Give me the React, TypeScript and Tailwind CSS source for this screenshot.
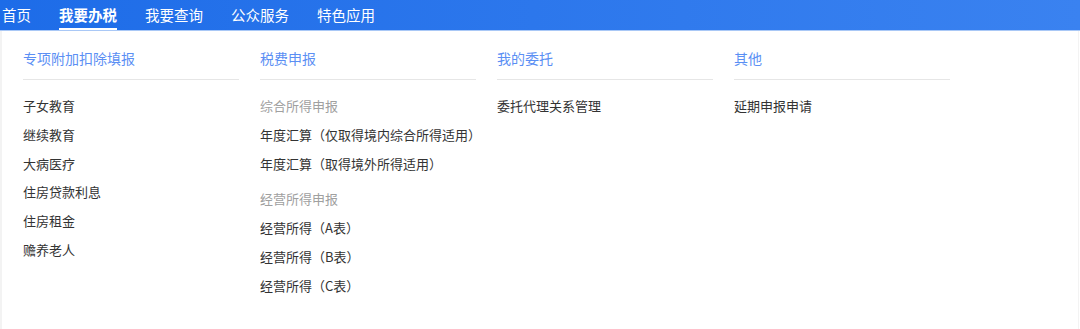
import React from "react";

type Group = { title?: string; items: string[] };
type Column = { heading: string; groups: Group[] };

const navItems = ["首页", "我要办税", "我要查询", "公众服务", "特色应用"];

const columns: Column[] = [
  {
    heading: "专项附加扣除填报",
    groups: [{ items: ["子女教育", "继续教育", "大病医疗", "住房贷款利息", "住房租金", "赡养老人"] }],
  },
  {
    heading: "税费申报",
    groups: [
      { title: "综合所得申报", items: ["年度汇算（仅取得境内综合所得适用）", "年度汇算（取得境外所得适用）"] },
      { title: "经营所得申报", items: ["经营所得（A表）", "经营所得（B表）", "经营所得（C表）"] },
    ],
  },
  { heading: "我的委托", groups: [{ items: ["委托代理关系管理"] }] },
  { heading: "其他", groups: [{ items: ["延期申报申请"] }] },
];

const App: React.FC = () => {
  return (
    <div className="w-[1080px] h-[329px] bg-white font-['Microsoft_YaHei','Noto_Sans_CJK_SC',sans-serif]">
      {/* Top nav */}
      <div className="h-[30px] bg-gradient-to-r from-[#1d6ce8] to-[#3a82f0] flex items-stretch gap-[28px] pl-[2px]">
        {navItems.map((label) => (
          <div
            key={label}
            className={`flex items-center text-[14.5px] leading-none text-white border-b-2 pt-[2px] ${
              label === "我要办税" ? "font-bold border-white" : "border-transparent"
            }`}
          >
            {label}
          </div>
        ))}
      </div>
      <div className="h-px bg-[#a9c8f6]" />

      {/* Dropdown panel */}
      <div className="w-[1079px] h-[298px] border-l-2 border-r border-[#f3f3f3] flex gap-[21px] pl-[21px] pt-[17px]">
        {columns.map((col) => (
          <div key={col.heading} className="w-[216px]">
            <div className="text-[14px] leading-[20px] text-[#5b8ff4] pb-[11px] border-b border-[#e6e6e6]">
              {col.heading}
            </div>
            <div className="pt-[12px]">
              {col.groups.map((g, gi) => (
                <div key={gi} className={gi > 0 ? "mt-[7px]" : ""}>
                  {g.title && <div className="text-[13px] leading-[28.8px] text-[#a0a0a0]">{g.title}</div>}
                  {g.items.map((it) => (
                    <div key={it} className="text-[13px] leading-[28.8px] text-[#333] whitespace-nowrap">
                      {it}
                    </div>
                  ))}
                </div>
              ))}
            </div>
          </div>
        ))}
      </div>
    </div>
  );
};

export default App;
